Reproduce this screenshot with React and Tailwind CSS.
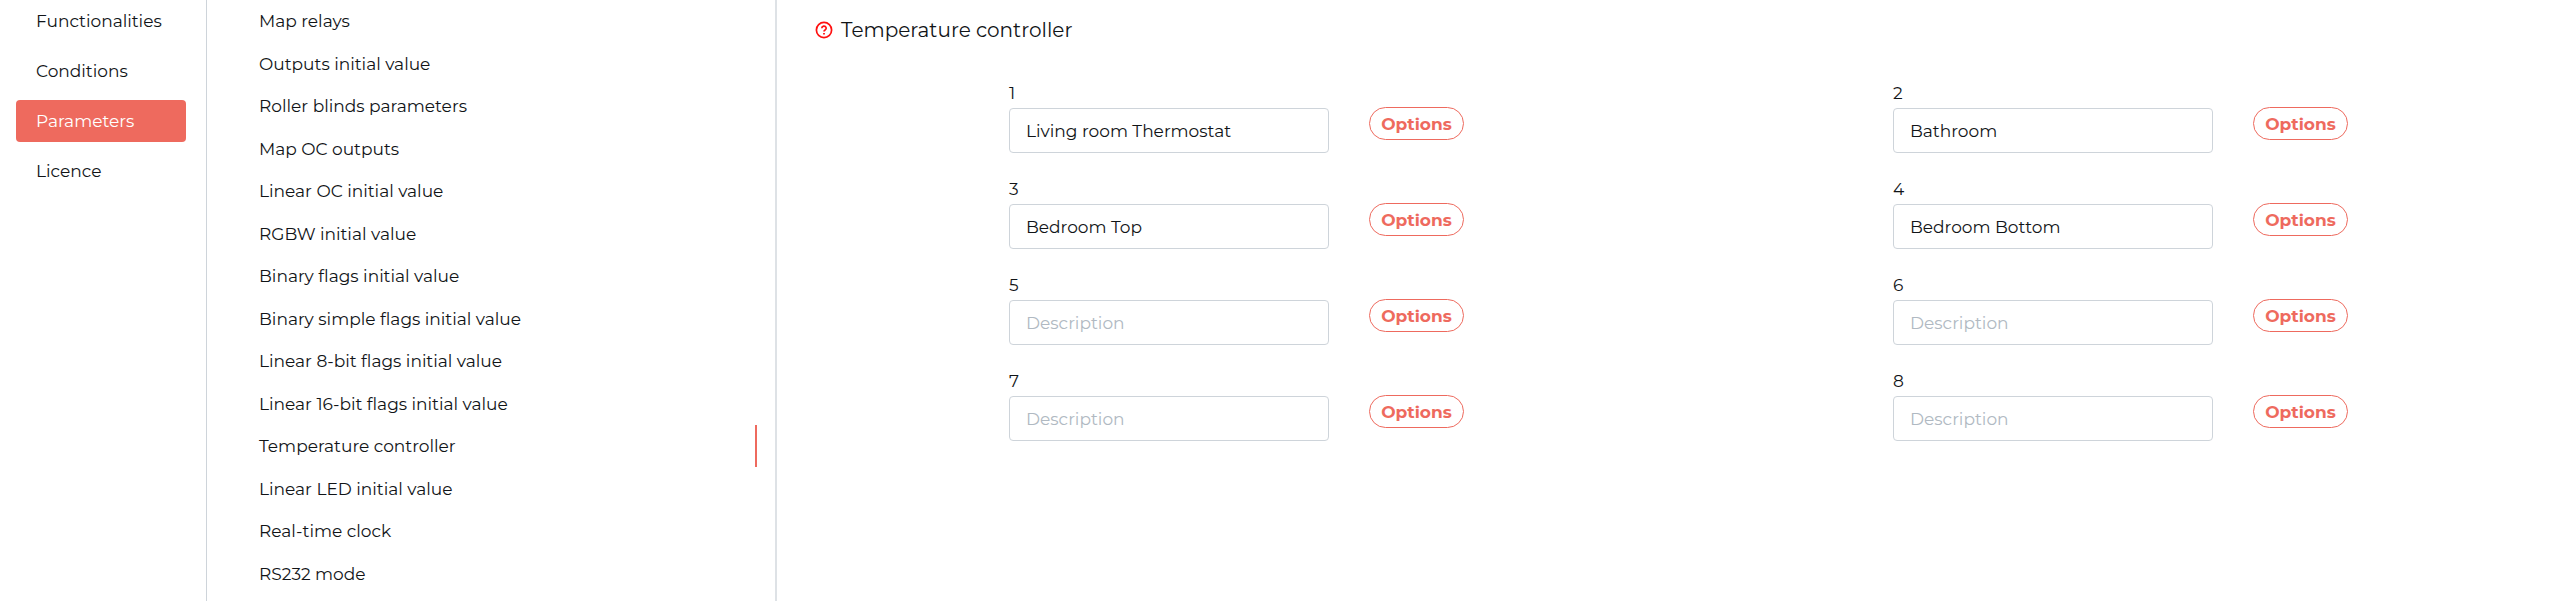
import React, { useState } from 'react';
import { clsx } from 'clsx';

const sections = ['Functionalities', 'Conditions', 'Parameters', 'Licence'];

const parameters = [
    'Map relays',
    'Outputs initial value',
    'Roller blinds parameters',
    'Map OC outputs',
    'Linear OC initial value',
    'RGBW initial value',
    'Binary flags initial value',
    'Binary simple flags initial value',
    'Linear 8-bit flags initial value',
    'Linear 16-bit flags initial value',
    'Temperature controller',
    'Linear LED initial value',
    'Real-time clock',
    'RS232 mode',
];

const initialDescriptions = ['Living room Thermostat', 'Bathroom', 'Bedroom Top', 'Bedroom Bottom', '', '', '', ''];

const HelpIcon = () => (
    <svg width="18" height="18" viewBox="0 0 18 18" fill="none" stroke="#ff1010" aria-hidden="true">
        <circle cx="9" cy="9" r="7.6" strokeWidth="1.7" />
        <path d="M6.8 7.2a2.2 2.1 0 1 1 3.3 1.8c-.8.5-1.1.8-1.1 1.6" strokeWidth="1.7" />
        <path d="M9 11.9v1.7" strokeWidth="1.8" />
    </svg>
);

const SectionNav = ({ active }) => (
    <nav className="flex shrink-0 flex-col gap-2 border-r border-[#ced4da] pr-5 pl-4">
        {sections.map((name) => (
            <a
                key={name}
                href="#"
                className={clsx(
                    'flex h-[42px] w-[170px] items-center rounded px-5',
                    name === active ? 'bg-[#ee6a5e] text-white' : 'text-[#111417]'
                )}
            >
                {name}
            </a>
        ))}
    </nav>
);

const ParameterNav = ({ active }) => (
    <nav className="flex w-[570px] shrink-0 flex-col justify-between border-r-2 border-[#dee2e6] pr-[18px] pb-1.5">
        {parameters.map((name) => (
            <a
                key={name}
                href="#"
                className={clsx(
                    'flex h-[42px] items-center border-r-2 pl-[52px] text-[#111417]',
                    name === active ? 'border-[#ee6a5e]' : 'border-transparent'
                )}
            >
                {name}
            </a>
        ))}
    </nav>
);

const ControllerField = ({ number, value, onChange }) => (
    <div className="flex items-center gap-10 pl-[25%]">
        <div className="flex flex-col">
            <label htmlFor={`controller-${number}`} className="h-[27px] text-[#111417]">
                {number}
            </label>
            <input
                id={`controller-${number}`}
                type="text"
                placeholder="Description"
                value={value}
                onChange={(e) => onChange(e.target.value)}
                className="h-[45px] w-80 rounded border border-[#ced4da] px-4 text-[#111417] placeholder:text-[#b0b9c2]"
            />
        </div>
        <button
            type="button"
            className="mt-[13px] h-[33px] w-[95px] rounded-full border border-[#ee6a5e] font-bold text-[#ee6a5e]"
        >
            Options
        </button>
    </div>
);

const App = () => {
    const [descriptions, setDescriptions] = useState(initialDescriptions);

    const updateDescription = (index, value) => {
        setDescriptions(descriptions.map((d, i) => (i === index ? value : d)));
    };

    return (
        <div className="flex min-h-screen bg-white font-['Montserrat','Inter',sans-serif] text-[17px] leading-6">
            <SectionNav active="Parameters" />
            <ParameterNav active="Temperature controller" />
            <main className="flex-1 pt-[14px] pl-[11px]">
                <h1 className="flex items-center gap-2 pl-[27px] text-xl leading-8 text-[#111417]">
                    <HelpIcon />
                    Temperature controller
                </h1>
                <div className="mt-[35px] grid grid-cols-2 gap-y-6">
                    {descriptions.map((value, i) => (
                        <ControllerField
                            key={i}
                            number={i + 1}
                            value={value}
                            onChange={(v) => updateDescription(i, v)}
                        />
                    ))}
                </div>
            </main>
        </div>
    );
};
export default App;
